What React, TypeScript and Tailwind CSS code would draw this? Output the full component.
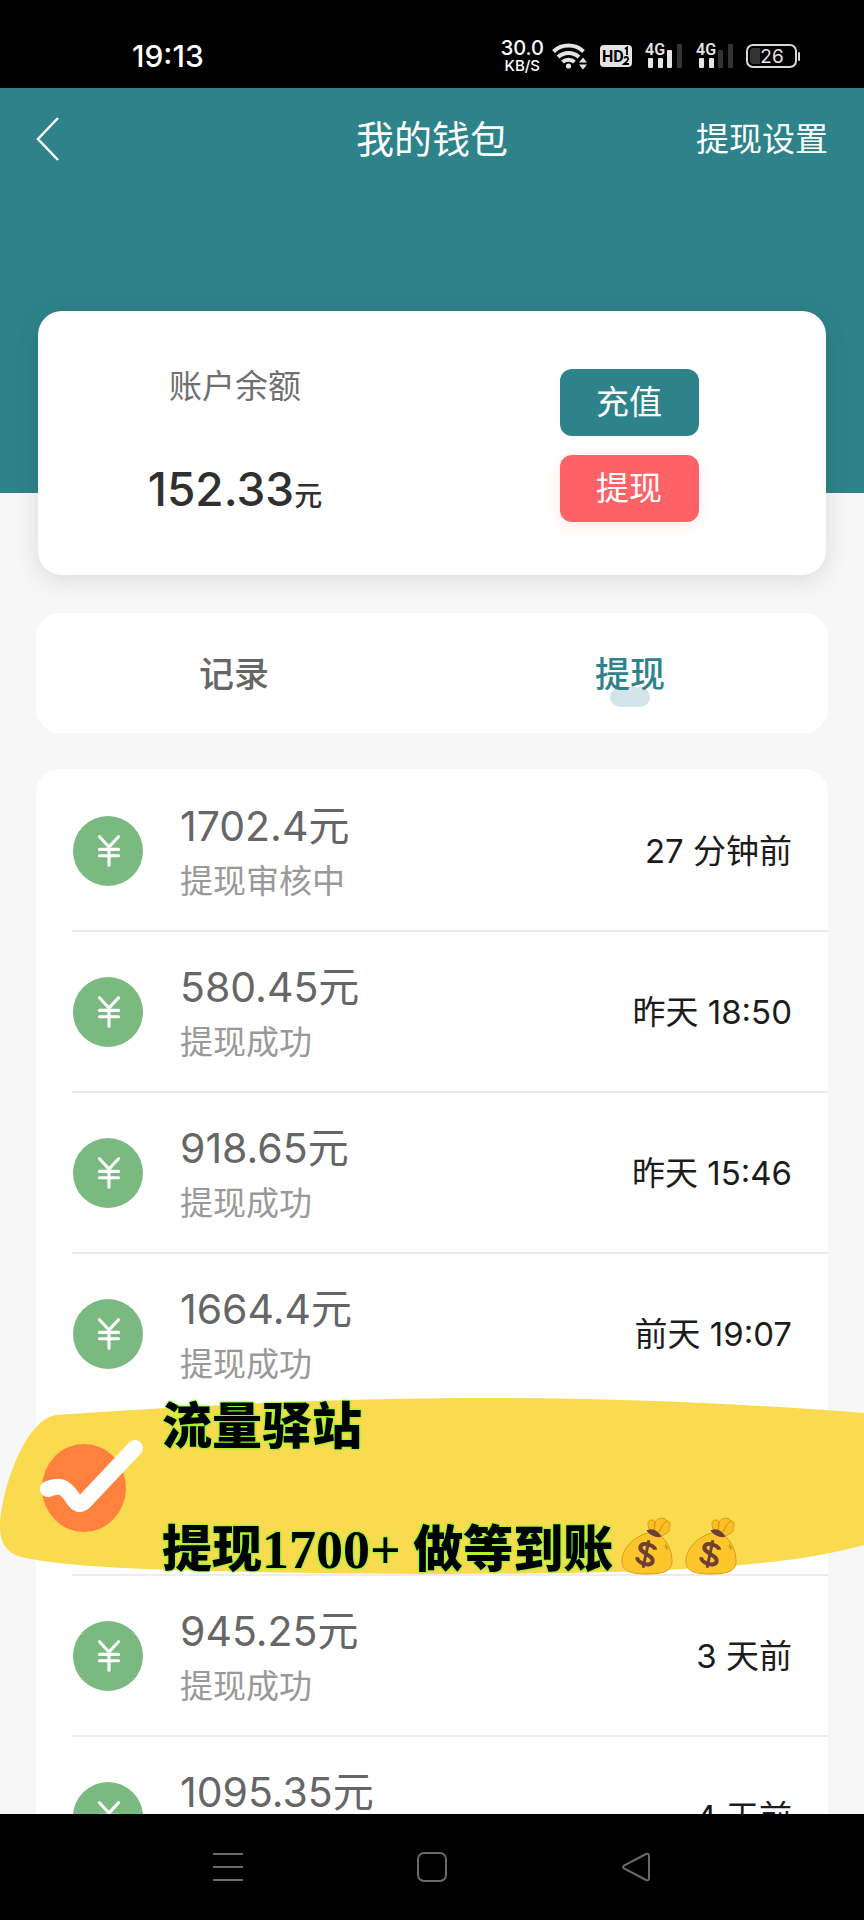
import React, { useState } from 'react';
import { JapaneseYen } from 'lucide-react';

// --- Types ---
interface WithdrawRecord {
  id: number;
  amount?: string;
  status?: string;
  time?: string;
}

const records: WithdrawRecord[] = [
  { id: 1, amount: '1702.4', status: '提现审核中', time: '27 分钟前' },
  { id: 2, amount: '580.45', status: '提现成功', time: '昨天 18:50' },
  { id: 3, amount: '918.65', status: '提现成功', time: '昨天 15:46' },
  { id: 4, amount: '1664.4', status: '提现成功', time: '前天 19:07' },
  { id: 5 }, // banner slot
  { id: 6, amount: '945.25', status: '提现成功', time: '3 天前' },
  { id: 7, amount: '1095.35', status: '提现成功', time: '4 天前' },
];

// --- Status bar ---
const Signal = ({ bars }: { bars: number }) => (
  <svg width="39" height="36" viewBox="0 0 39 36">
    <text x="1" y="17" fontSize="16" fontWeight="600" fill="#e4e4e4" fontFamily="Roboto, sans-serif">4G</text>
    {[
      [4, 20],
      [14, 20],
      [23, 12],
      [33, 6],
    ].map(([x, y], i) => (
      <rect key={x} x={x} y={y} width="5" height={30 - y} rx="1" fill={i < bars ? '#e4e4e4' : '#333'} />
    ))}
  </svg>
);

const StatusBar = () => (
  <div className="flex h-[88px] shrink-0 items-center justify-between bg-black pl-[132px] pr-16 pt-6 text-white">
    <span className="text-[30px] font-medium leading-8">19:13</span>
    <div className="flex items-center gap-3">
      <div className="-mr-1 flex flex-col items-center font-medium">
        <span className="text-xl leading-5">30.0</span>
        <span className="text-[15px] leading-4">KB/S</span>
      </div>
      <svg width="36" height="28" viewBox="0 0 36 28" fill="none" stroke="#e4e4e4" strokeWidth="4">
        <path d="M1.500 9.500a22 22 0 0 1 30 0" />
        <path d="M6 15a15.500 15.500 0 0 1 21 0" />
        <path d="M10.500 20a9 9 0 0 1 12 0" />
        <circle cx="16.500" cy="24" r="2.600" fill="#e4e4e4" stroke="none" />
        <path d="M27 20.500l4-5 4 5zM27 22.500l4 5 4-5z" fill="#e4e4e4" stroke="none" />
      </svg>
      <svg width="32" height="24" viewBox="0 0 32 24">
        <rect y="1" width="32" height="22" rx="4" fill="#e4e4e4" />
        <text x="2" y="18" fontSize="16" fontWeight="700" fill="#000" fontFamily="Roboto, sans-serif">HD</text>
        <path d="M25 5l2-1.500V11M24 14q3-2 4 0t-4 6h5" fill="none" stroke="#000" strokeWidth="1.800" />
      </svg>
      <Signal bars={3} />
      <Signal bars={2} />
      <svg width="54" height="24" viewBox="0 0 54 24">
        <rect x="1" y="1" width="49" height="22" rx="6" fill="none" stroke="#d8d8d8" strokeWidth="2" />
        <path d="M8 4h6v16H8a4 4 0 0 1-4-4V8a4 4 0 0 1 4-4z" fill="#333" />
        <rect x="52" y="8" width="2" height="9" rx="1" fill="#d8d8d8" />
        <text x="26" y="19" fontSize="19" textAnchor="middle" fill="#e4e4e4">26</text>
      </svg>
    </div>
  </div>
);

// --- Banner ---
const MoneyBag = () => (
  <svg width="52" height="58" viewBox="0 0 52 58">
    <path d="M30 15C25 8 27 2 31 3c2 0 3 2 3 2 3-5 10-5 12-1 4 0 4 4 2 6 2 4-2 6-7 9z" fill="#fbbf24" stroke="#d99a1c" />
    <path d="M34 5c0 4-1 7-1 10M46 4c-3 2-6 6-8 11" fill="none" stroke="#c98a18" />
    <path d="M27 16C14 19 1 31 1 44c0 10 8 13 25 13s25-3 25-13c0-11-5-20-12-26z" fill="#fdc62b" stroke="#d99a1c" />
    <path d="M27 14c4-2 10 1 12 5-3 1-10-2-12-5z" fill="#6d4038" stroke="#6d4038" strokeWidth="2" />
    <path d="M44 27c2 1 4 4 3 6-2 0-4-3-3-6z" fill="#d99a1c" />
    <g transform="rotate(12 25 37)" fill="none" stroke="#6d4038" strokeWidth="4">
      <path d="M33 31c-1-4-14-6-15 0 0 7 15 5 15 12 0 6-15 5-16-1" />
      <path d="M25 23v28" strokeWidth="3" />
    </g>
  </svg>
);

const Banner = () => (
  <div className="absolute -left-9 -right-9 -top-[18px] z-10 h-[178px]">
    <svg className="absolute inset-0 h-full w-full" viewBox="0 0 864 178" preserveAspectRatio="none">
      <path
        d="M55 18C190 9 330 1 490 1c130 0 260 6 374 15v132c-50 14-110 21-220 26-120 4-290 4-470-1-60-2-115-5-148-12C4 157-3 143 1 116 7 76 28 24 55 18z"
        fill="#fadb50"
      />
    </svg>
    <svg className="absolute left-9 top-10" width="110" height="100" viewBox="0 0 110 100">
      <ellipse cx="48" cy="51" rx="42" ry="44" fill="#ff813d" />
      <path d="M12 52c12-5 17-2 24 8 5 8 8 9 13 4L99 11" fill="none" stroke="#fff" strokeWidth="16" strokeLinecap="round" strokeLinejoin="round" />
    </svg>
    <div className="relative flex flex-col gap-[60px] pl-[162px] font-['Liberation_Serif','Noto_Sans_CJK_SC',serif] text-[50px] font-black leading-[60px] text-black [text-shadow:0_0_2px_#7dff2a,0_0_2px_#7dff2a,0_0_3px_#7dff2a]">
      <p>流量驿站</p>
      <p className="flex items-center whitespace-pre">
        提现<span className="text-[54px]">1700+</span> 做等到账
        <span className="flex gap-3 pb-2 pl-2">
          <MoneyBag />
          <MoneyBag />
        </span>
      </p>
    </div>
  </div>
);

// --- List ---
const RecordRow = ({ record, divider }: { record: WithdrawRecord; divider: boolean }) => (
  <li className="relative h-[161px] shrink-0 pl-9">
    {record.amount ? (
      <div className={`flex h-full items-center border-b-2 pl-px pr-9 ${divider ? 'border-[#ececec]' : 'border-white'}`}>
        <div className="flex size-[70px] items-center justify-center rounded-full bg-[#7aba80] pl-px text-white">
          <JapaneseYen size={38} strokeWidth={2} />
        </div>
        <div className="flex flex-1 flex-col pl-[37px]">
          <span className="text-[41px] leading-[60px] text-[#666]">{record.amount}元</span>
          <span className="text-[33px] leading-[50px] text-[#999]">{record.status}</span>
        </div>
        <span className="text-[33px] leading-[50px] text-[#1c1c1c]">{record.time}</span>
      </div>
    ) : (
      <>
        <div className="h-full border-b-2 border-[#ececec]" />
        <Banner />
      </>
    )}
  </li>
);

const tabs = ['记录', '提现'];

export default function App() {
  const [activeTab, setActiveTab] = useState('提现');

  return (
    <div className="flex h-screen flex-col overflow-hidden bg-[#f7f7f7] font-['Inter','Noto_Sans_CJK_SC',sans-serif]">
      <StatusBar />

      <main className="flex min-h-0 flex-1 flex-col overflow-hidden">
        <header className="h-[405px] shrink-0 bg-[#2d8389] px-9 text-white">
          <div className="grid h-[102px] grid-cols-[1fr_auto_1fr] items-center">
            <button aria-label="返回" className="w-6">
              <svg width="24" height="46" viewBox="0 0 24 46" fill="none" stroke="currentColor" strokeWidth="2.500">
                <path d="M22 2L2 23l20 21" />
              </svg>
            </button>
            <h1 className="text-[38px] leading-[50px]">我的钱包</h1>
            <a href="#settings" className="justify-self-end text-[33px] leading-[50px]">提现设置</a>
          </div>
        </header>

        <section className="mx-[38px] -mt-[182px] grid h-[264px] shrink-0 grid-cols-2 justify-items-center rounded-3xl bg-white pt-[58px] shadow-[0_4px_24px_rgba(50,50,60,0.14)]">
          <div className="flex flex-col items-center gap-14">
            <span className="text-[33px] leading-[34px] text-[#707070]">账户余额</span>
            <span className="text-[46px] font-medium leading-[60px] text-[#303030]">
              152.33<span className="text-[28px]">元</span>
            </span>
          </div>
          <div className="flex flex-col gap-[19px] text-[33px] text-white">
            <button className="h-[67px] w-[139px] rounded-xl bg-[#2d8389]">充值</button>
            <button className="h-[67px] w-[139px] rounded-xl bg-[#fe6266] shadow-[0_4px_20px_rgba(254,98,102,0.14)]">提现</button>
          </div>
        </section>

        <nav className="mx-9 mt-[38px] grid h-[120px] shrink-0 grid-cols-2 rounded-3xl bg-white pt-0.5">
          {tabs.map((tab) => (
            <button
              key={tab}
              onClick={() => setActiveTab(tab)}
              className={`flex items-center justify-center text-[35px] font-medium ${
                activeTab === tab ? 'text-[#2d8389]' : 'text-[#666]'
              }`}
            >
              <span className="relative isolate">
                {tab}
                {activeTab === tab && (
                  <span className="absolute bottom-[-7px] left-1/2 -z-10 h-5 w-10 -translate-x-1/2 rounded-full bg-[#d3e4ea]" />
                )}
              </span>
            </button>
          ))}
        </nav>

        <ul className="mx-9 mt-9 flex shrink-0 flex-col rounded-t-3xl bg-white pt-0.5">
          {records.map((record, i) => (
            <RecordRow key={record.id} record={record} divider={!records[i + 1] || !!records[i + 1].amount} />
          ))}
        </ul>
      </main>

      <footer className="z-20 flex h-[106px] shrink-0 items-center justify-around bg-black px-[126px] text-[#6a6a6a]">
        <button aria-label="菜单">
          <svg width="30" height="32" viewBox="0 0 30 32" stroke="currentColor" strokeWidth="2">
            <path d="M0 3h30M0 16h30M0 29h30" />
          </svg>
        </button>
        <button aria-label="主页">
          <svg width="30" height="32" viewBox="0 0 30 32" fill="none" stroke="currentColor" strokeWidth="2">
            <rect x="1" y="2" width="28" height="28" rx="6" />
          </svg>
        </button>
        <button aria-label="后退">
          <svg width="30" height="32" viewBox="0 0 30 32" fill="none" stroke="currentColor" strokeWidth="2">
            <path d="M25 3L3 14.500q-2 1.500 0 3L25 29q3 1 3-2V5q0-3-3-2z" />
          </svg>
        </button>
      </footer>
    </div>
  );
}
